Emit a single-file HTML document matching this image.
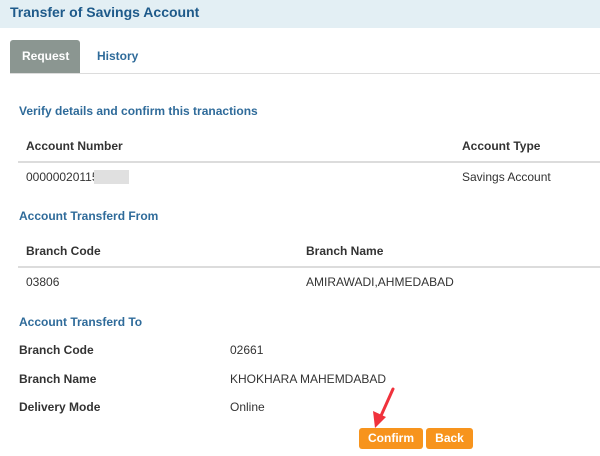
<!DOCTYPE html>
<html><head><meta charset="utf-8"><style>
body{margin:0;width:600px;height:456px;background:#fff;position:relative;overflow:hidden;font-family:"Liberation Sans",Arial,sans-serif;font-size:12px;color:#333}
.a{position:absolute;white-space:nowrap}
.b{font-weight:bold}
.blue{color:#2f6b9a;font-weight:bold}
.hl{position:absolute;height:2px;background:#dcdcdc}
.btn{position:absolute;background:#f7941d;color:#fff;font-weight:bold;border-radius:3px;text-align:center;line-height:21px;font-size:12px}
</style></head><body>
<div class="a" style="left:0;top:0;width:600px;height:28px;background:#e3eff4"></div>
<div class="a" style="left:10px;top:4px;font-size:14px;font-weight:bold;color:#1e5a8a">Transfer of Savings Account</div>
<div class="a" style="left:10px;top:40px;width:70px;height:33px;background:#8b9691;border-radius:3px 3px 0 0"></div>
<div class="a b" style="left:22px;top:49px;color:#fff">Request</div>
<div class="a b" style="left:97px;top:49px;color:#2f6b9a">History</div>
<div class="hl" style="left:10px;top:73px;width:590px;height:1px"></div>
<div class="a blue" style="left:19px;top:104px">Verify details and confirm this tranactions</div>
<div class="a b" style="left:26px;top:139px">Account Number</div>
<div class="a b" style="left:462px;top:139px">Account Type</div>
<div class="hl" style="left:18px;top:161px;width:582px"></div>
<div class="a" style="left:26px;top:170px">00000020115</div>
<div class="a" style="left:94px;top:170px;width:35px;height:14px;background:#e0e0e0"></div>
<div class="a" style="left:462px;top:170px">Savings Account</div>
<div class="a blue" style="left:19px;top:209px">Account Transferd From</div>
<div class="a b" style="left:26px;top:244px">Branch Code</div>
<div class="a b" style="left:306px;top:244px">Branch Name</div>
<div class="hl" style="left:18px;top:266px;width:582px"></div>
<div class="a" style="left:26px;top:275px">03806</div>
<div class="a" style="left:306px;top:275px">AMIRAWADI,AHMEDABAD</div>
<div class="a blue" style="left:19px;top:315px">Account Transferd To</div>
<div class="a b" style="left:19px;top:343px">Branch Code</div>
<div class="a" style="left:230px;top:343px">02661</div>
<div class="a b" style="left:19px;top:372px">Branch Name</div>
<div class="a" style="left:230px;top:372px">KHOKHARA MAHEMDABAD</div>
<div class="a b" style="left:19px;top:400px">Delivery Mode</div>
<div class="a" style="left:230px;top:400px">Online</div>
<div class="btn" style="left:359px;top:428px;width:64px">Confirm</div>
<div class="btn" style="left:426px;top:428px;width:47px">Back</div>
<svg class="a" style="left:0;top:0" width="600" height="456"><line x1="393" y1="389" x2="380" y2="418" stroke="#f0323c" stroke-width="3" stroke-linecap="round"/><polygon points="375,428 373,411 386,417" fill="#f0323c"/></svg>
</body></html>
